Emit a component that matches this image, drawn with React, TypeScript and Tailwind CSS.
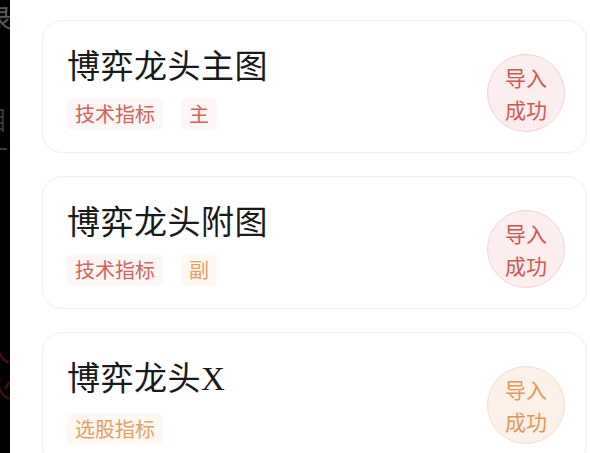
import React from 'react';

type Tone = 'red' | 'orange';

interface IndicatorItem {
  title: React.ReactNode;
  tags: { text: string; tone: Tone }[];
  tone: Tone;
}

const tagStyle: Record<Tone, string> = {
  red: 'bg-[#fef6f6] text-[#d4625f]',
  orange: 'bg-[#fef8f2] text-[#e4a064]',
};

const badgeStyle: Record<Tone, string> = {
  red: 'bg-[#fcedee] border-[#f1d3d3] text-[#cc5856]',
  orange: 'bg-[#fcf1e8] border-[#f2dcc8] text-[#e0985a]',
};

const items: IndicatorItem[] = [
  {
    title: '博弈龙头主图',
    tags: [
      { text: '技术指标', tone: 'red' },
      { text: '主', tone: 'red' },
    ],
    tone: 'red',
  },
  {
    title: '博弈龙头附图',
    tags: [
      { text: '技术指标', tone: 'red' },
      { text: '副', tone: 'orange' },
    ],
    tone: 'red',
  },
  {
    title: (
      <>
        博弈龙头<span className="font-['Liberation_Serif',serif]">X</span>
      </>
    ),
    tags: [{ text: '选股指标', tone: 'orange' }],
    tone: 'orange',
  },
];

function ImportBadge({ tone }: { tone: Tone }) {
  return (
    <div
      className={`mt-[10px] w-[78px] h-[78px] shrink-0 rounded-full border flex flex-col items-center justify-center text-[21px] leading-[32px] ${badgeStyle[tone]}`}
    >
      <span>导入</span>
      <span>成功</span>
    </div>
  );
}

function IndicatorCard({ item }: { item: IndicatorItem }) {
  return (
    <div className="h-[133px] shrink-0 rounded-[20px] border border-[#efefef] bg-white flex items-start justify-between pl-[24px] pr-[21px] pt-[23px]">
      <div className="flex flex-col">
        <div className="text-[33px] leading-[40px] text-[#1a1a1a] tracking-[0.5px]">{item.title}</div>
        <div className="flex gap-[18px] mt-[14px]">
          {item.tags.map((tag) => (
            <span
              key={tag.text}
              className={`h-[32px] px-[8px] rounded-[6px] flex items-center text-[20px] ${tagStyle[tag.tone]}`}
            >
              {tag.text}
            </span>
          ))}
        </div>
      </div>
      <ImportBadge tone={item.tone} />
    </div>
  );
}

export default function App() {
  return (
    <div className="w-[590px] h-[453px] flex overflow-hidden bg-white font-['Noto_Sans_CJK_SC','Noto_Sans',sans-serif]">
      {/* dark edge of the window behind */}
      <div className="w-[10px] shrink-0 bg-black overflow-hidden flex flex-col text-[#5a5a5a] text-[26px] leading-none">
        <span className="-ml-[14px] mt-[4px]">录</span>
        <span className="-ml-[18px] mt-[76px] text-[#3a3a3a]">目</span>
        <span className="-ml-[18px] mt-[4px] text-[#3a3a3a]">十</span>
        <span className="-ml-[16px] mt-[80px] text-[#333]">V</span>
        <span className="-ml-[16px] mt-[70px] text-[#4a1010]">人</span>
        <span className="-ml-[14px] mt-[10px] text-[#4a1010]">火</span>
      </div>
      <div className="flex-1 flex flex-col gap-[23px] pt-[20px] pl-[32px] pr-[3px]">
        {items.map((item, i) => (
          <IndicatorCard key={i} item={item} />
        ))}
      </div>
    </div>
  );
}
